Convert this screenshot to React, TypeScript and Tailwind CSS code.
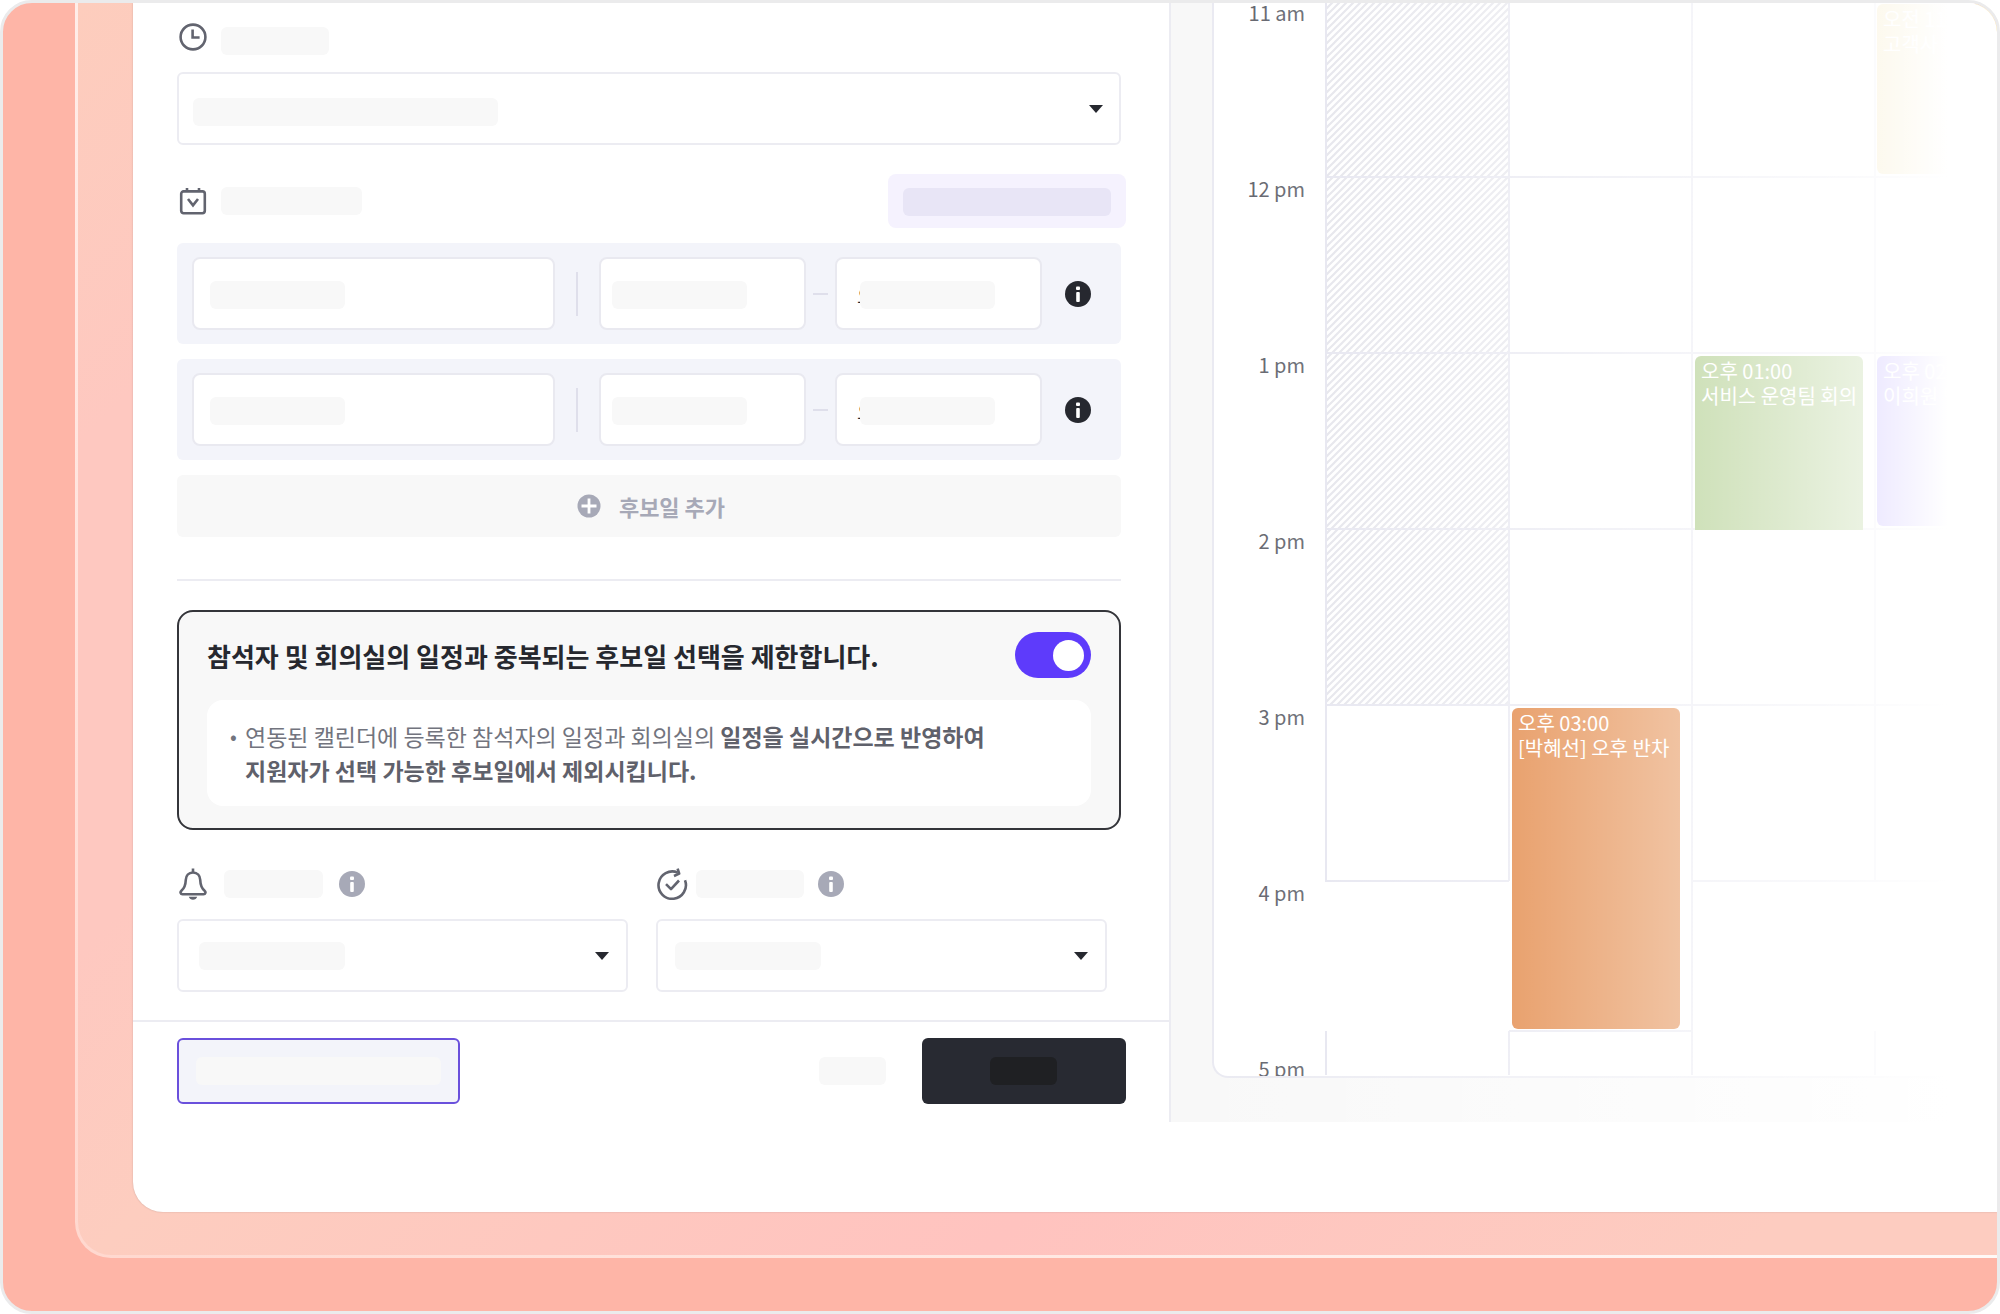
import React, { useState } from 'react';
import clsx from 'clsx';

type Slot = {
    id: number;
    start: string;
};

type CalendarEvent = {
    time: string;
    title: string;
    place: string;
    color: string;
};

const slots: Slot[] = [
    { id: 1, start: '오' },
    { id: 2, start: '오' },
];

const hours = ['11 am', '12 pm', '1 pm', '2 pm', '3 pm', '4 pm'];

const events: CalendarEvent[] = [
    { time: '오후 03:00', title: '[박혜선] 오후 반차', place: 'left-[187px] top-[705px] h-[321px] rounded-md', color: 'bg-[#d95f07]' },
    { time: '오후 01:00', title: '서비스 운영팀 회의', place: 'left-[370px] top-[353px] h-[174px] rounded-t-md', color: 'bg-[#79ab3e]' },
    { time: '오전 11:00', title: '고객사 미팅', place: 'left-[552px] top-px h-[170px] rounded-md', color: 'bg-[#ecd27c]' },
    { time: '오후 02:00', title: '이희원 면접', place: 'left-[552px] top-[353px] h-[170px] rounded-md', color: 'bg-[#7c5eff]' },
];

const Bone = ({ className }: { className?: string }) => (
    <span className={clsx('block h-7 shrink-0 rounded-md', className)} />
);

const Caret = () => (
    <svg viewBox="0 0 14 8" className="pointer-events-none h-2 w-3.5 shrink-0 fill-[#26282f]">
        <path d="M0 0h14L7 8z" />
    </svg>
);

const InfoIcon = ({ className }: { className?: string }) => (
    <svg viewBox="0 0 26 26" className={clsx('size-[26px] shrink-0', className)}>
        <circle cx="13" cy="13" r="13" fill="currentColor" />
        <rect x="11" y="5.6" width="4" height="3.4" rx="1" fill="#fff" />
        <rect x="11.2" y="11" width="3.6" height="10" rx="1" fill="#fff" />
    </svg>
);

const ClockIcon = () => (
    <svg viewBox="0 0 28 28" className="size-7 shrink-0" fill="none" stroke="#62646f" strokeWidth="2.6">
        <circle cx="14" cy="14" r="12.4" />
        <path d="M13.6 6.5v8h7" />
    </svg>
);

const CalendarIcon = () => (
    <svg viewBox="0 0 28 28" className="size-7 shrink-0" fill="none" stroke="#62646f" strokeWidth="2.6">
        <rect x="2.2" y="4.4" width="23.6" height="21.8" rx="2.4" />
        <path d="M8 1v4M20 1v4M9 12l5 6.4 5-6.4" />
    </svg>
);

const BellIcon = () => (
    <svg viewBox="0 0 28 32" className="h-8 w-7 shrink-0" fill="none" stroke="#62646f" strokeWidth="2.6" strokeLinejoin="round">
        <path d="M14 4.5c-4.5 0-7 3.2-7.2 7.3-.2 5-.9 8.200-4.300 10.800-1.700 1.500-1 3.600 1 3.600h21c2 0 2.700-2.100 1-3.600-3.400-2.600-4.100-5.800-4.300-10.800-.2-4.100-2.700-7.300-7.200-7.300z" />
        <path d="M14 .5v4" />
        <path d="M9.800 28.800h8.400c-.6 1.900-2.200 3-4.200 3s-3.600-1.100-4.200-3z" fill="#62646f" stroke="none" />
    </svg>
);

const RefreshCheckIcon = () => (
    <svg viewBox="0 0 32 32" className="size-8 shrink-0" fill="none" stroke="#62646f" strokeWidth="2.6" strokeLinejoin="round">
        <path d="M29 12.200a13.700 13.700 0 1 1-7.200-7.600" />
        <path d="M21.600 .6l1.600 5-5.200 2.400" />
        <path d="M10 16.200l5 5 8-8.700" />
    </svg>
);

const SelectBox = ({ label, bone, className }: { label: string; bone: string; className?: string }) => (
    <div className={clsx('relative flex h-[73px] items-center justify-between rounded-md border-2 border-[#ececf2] bg-white', className)}>
        <Bone className={clsx('bg-[#f8f8f8]', bone)} />
        <Caret />
        <select aria-label={label} className="absolute inset-0 size-full cursor-pointer appearance-none opacity-0" />
    </div>
);

const TextBox = ({ label, value, bone, className }: { label: string; value?: string; bone: string; className?: string }) => (
    <div className={clsx('relative h-[73px] rounded-lg border-2 border-[#e9e9f0] bg-white', className)}>
        <input
            aria-label={label}
            defaultValue={value}
            className="size-full bg-transparent pl-5 pt-1 text-[20px] text-[#26282f] outline-none"
        />
        <Bone className={clsx('pointer-events-none absolute top-[22px] bg-[#f8f8f8]', bone)} />
    </div>
);

const SlotRow = ({ slot }: { slot: Slot }) => (
    <div className="flex h-[101px] items-center rounded-md bg-[#f3f4fa] pl-[15px] pr-[30px]">
        <TextBox label="날짜" bone="left-4 w-[135px]" className="flex-1" />
        <span className="mx-[21px] h-11 w-[2px] bg-[#dfdfeb]" />
        <TextBox label="시작" bone="left-[11px] w-[135px]" className="w-[207px]" />
        <span className="mx-[7px] h-[2px] w-[15px] bg-[#dfdfeb]" />
        <TextBox label="종료" value={slot.start} bone="left-[23px] w-[135px]" className="w-[207px]" />
        <button type="button" aria-label="정보" className="ml-[23px]">
            <InfoIcon className="text-[#26282f]" />
        </button>
    </div>
);

const ScheduleForm = () => {
    const [limited, setLimited] = useState(true);

    return (
        <section className="flex w-[1038px] shrink-0 flex-col border-r-2 border-[#ececf2]">
            <div className="px-11 pr-12 pt-5">
                <div className="flex h-8 items-start gap-3.5 pl-0.5">
                    <ClockIcon />
                    <Bone className="mt-1 w-[108px] bg-[#f8f8f8]" />
                </div>
                <SelectBox label="시간" bone="mt-1.5 w-[305px]" className="mt-[17px] pl-3.5 pr-4" />

                {/* Candidate dates */}
                <div className="-mr-[5px] mt-[29px] flex h-[54px] items-center gap-3.5 pl-0.5">
                    <CalendarIcon />
                    <Bone className="w-[141px] bg-[#f8f8f8]" />
                    <button type="button" aria-label="일정 불러오기" className="ml-auto rounded-lg bg-[#f5f2fe] px-[15px] pb-3 pt-3.5">
                        <Bone className="w-[208px] bg-[#e8e5f6]" />
                    </button>
                </div>
                <div className="mt-[15px] flex flex-col gap-[15px]">
                    {slots.map((slot) => (
                        <SlotRow key={slot.id} slot={slot} />
                    ))}
                    <button type="button" className="flex h-[62px] items-center justify-center gap-[18px] rounded-md bg-[#f8f8f8] pl-1 text-[22px] font-bold text-[#a7a9b7]">
                        <svg viewBox="0 0 24 24" className="size-6">
                            <circle cx="12" cy="12" r="11.5" fill="#a7a9b7" />
                            <path d="M12 4.5v15M4.5 12h15" stroke="#fff" strokeWidth="2.8" />
                        </svg>
                        후보일 추가
                    </button>
                </div>
                <hr className="mt-[42px] border-t-2 border-[#ececf2]" />

                {/* Overlap limit */}
                <div className="mt-[29px] rounded-2xl border-2 border-[#34353a] bg-[#f8f8f8] px-7 pb-[22px] pt-5">
                    <div className="flex items-center justify-between">
                        <h2 className="text-[26px] font-bold text-[#26282f]">참석자 및 회의실의 일정과 중복되는 후보일 선택을 제한합니다.</h2>
                        <button
                            type="button"
                            role="switch"
                            aria-checked={limited}
                            aria-label="중복 후보일 제한"
                            onClick={() => setLimited(!limited)}
                            className={clsx('flex h-[46px] w-[76px] items-center rounded-full px-[7px]', limited ? 'justify-end bg-[#5e3bfb]' : 'bg-[#a7a9b7]')}
                        >
                            <span className="size-[31px] rounded-full bg-white" />
                        </button>
                    </div>
                    <ul className="mt-[22px] rounded-2xl bg-white py-[19px] pl-[23px] text-[23px] leading-[34px] text-[#72747e]">
                        <li className="flex">
                            <span className="w-[15px] shrink-0 text-[20px]">•</span>
                            <span>
                                연동된 캘린더에 등록한 참석자의 일정과 회의실의{' '}
                                <b className="font-bold text-[#5f616b]">
                                    일정을 실시간으로 반영하여
                                    <br />
                                    지원자가 선택 가능한 후보일에서 제외시킵니다.
                                </b>
                            </span>
                        </li>
                    </ul>
                </div>

                <div className="mr-3.5 mt-[38px] flex gap-7">
                    <div className="flex-1">
                        <div className="flex h-8 items-center pl-0.5">
                            <BellIcon />
                            <Bone className="ml-[17px] w-[99px] bg-[#f8f8f8]" />
                            <InfoIcon className="ml-4 text-[#a7a9b7]" />
                        </div>
                        <SelectBox label="알림" bone="w-[146px]" className="mt-[19px] pl-5 pr-[17px]" />
                    </div>
                    <div className="flex-1">
                        <div className="flex h-8 items-center">
                            <RefreshCheckIcon />
                            <Bone className="ml-2 w-[108px] bg-[#f8f8f8]" />
                            <InfoIcon className="ml-3.5 text-[#a7a9b7]" />
                        </div>
                        <SelectBox label="응답 마감" bone="w-[146px]" className="mt-[19px] pl-[17px] pr-[17px]" />
                    </div>
                </div>
            </div>

            {/* Footer */}
            <div className="mt-7 flex items-center border-t-2 border-[#ececf2] pb-[18px] pl-11 pr-[43px] pt-4">
                <button type="button" aria-label="미리보기" className="flex h-[66px] w-[283px] items-center rounded-md border-2 border-[#6a50dc] bg-[#f3f4fa] px-[17px]">
                    <Bone className="w-full bg-[#f8f8f8]" />
                </button>
                <button type="button" aria-label="취소" className="ml-auto">
                    <Bone className="w-[67px] bg-[#f8f8f8]" />
                </button>
                <button type="button" aria-label="보내기" className="ml-9 flex h-[66px] w-[204px] items-center justify-center rounded-md bg-[#282a32] pr-0.5">
                    <Bone className="w-[67px] bg-[#1f2023]" />
                </button>
            </div>
        </section>
    );
};

const Calendar = () => (
    <section className="relative flex min-w-0 flex-1 bg-[#f8f8f8] pb-11 pl-[41px]">
        <div className="flex min-w-0 flex-1 overflow-hidden rounded-bl-2xl border-b-2 border-l-2 border-[#e9e9f1] bg-white">
            <div className="w-[91px] shrink-0 text-right text-[20px] leading-5 text-[#565862]">
                {hours.map((hour) => (
                    <div key={hour} className="h-44 text-nowrap">{hour}</div>
                ))}
                <div className="h-4">5 pm</div>
            </div>

            {/* Day columns */}
            <div className="relative ml-5 h-[1072px] flex-1 overflow-hidden">
                <svg className="block size-full" stroke="#e3e3ee" strokeWidth="2">
                    <defs>
                        <pattern id="off-hours" width="7" height="7" patternUnits="userSpaceOnUse">
                            <path d="M-2 2l4-4M-1 8l9-9M5 9l4-4" stroke="#e2e2e9" strokeWidth="2.2" />
                        </pattern>
                    </defs>
                    <rect width="184" height="703" fill="url(#off-hours)" stroke="none" />
                    <path d="M0 174h700M0 350h700M0 526h700M0 702h700M0 878h184M367 878h333M184 1028h183" />
                    <path d="M1 0v878M1 1028v50M184 0v878M184 1028v50M367 0v1078M550 0v878M550 1028v50" />
                </svg>
                {events.map((event) => (
                    <div
                        key={event.title}
                        className={clsx('absolute w-[168px] overflow-hidden text-nowrap px-1.5 pt-0.5 text-[20px] leading-[25px] text-white', event.place, event.color)}
                    >
                        <p>{event.time}</p>
                        <p>{event.title}</p>
                    </div>
                ))}
            </div>
        </div>

        {/* Fade out to the right */}
        <div className="pointer-events-none absolute inset-0 bg-[linear-gradient(to_right,rgba(255,255,255,0),rgba(255,255,255,0.85)_84%,#fff_94%)]" />
    </section>
);

export default function App() {
    return (
        <div className="min-h-screen bg-white font-['Noto_Sans_CJK_KR','Noto_Sans',sans-serif]">
            <div className="overflow-hidden rounded-[32px] border-[3px] border-[#ebebec] bg-[#feb5a7] pb-[53px] pl-[72px]">
                <div className="rounded-bl-[36px] bg-[radial-gradient(circle_at_bottom_left,#ffd8cf,#fff8f6_1900px)] pb-[3px] pl-[3px]">
                    <div className="rounded-bl-[33px] bg-[linear-gradient(135deg,#fdcdbd,#fec8c0_14%,#fec8c0_30%,#fdcdbf_40%,#ffc3bf_68%,#fdccc0_92%)] pb-[43px] pl-[55px]">
                        <main className="overflow-hidden rounded-bl-[30px] bg-white pb-[90px] shadow-[0_0_2px_#00000030]">
                            <div className="flex">
                                <ScheduleForm />
                                <Calendar />
                            </div>
                        </main>
                    </div>
                </div>
            </div>
        </div>
    );
}
